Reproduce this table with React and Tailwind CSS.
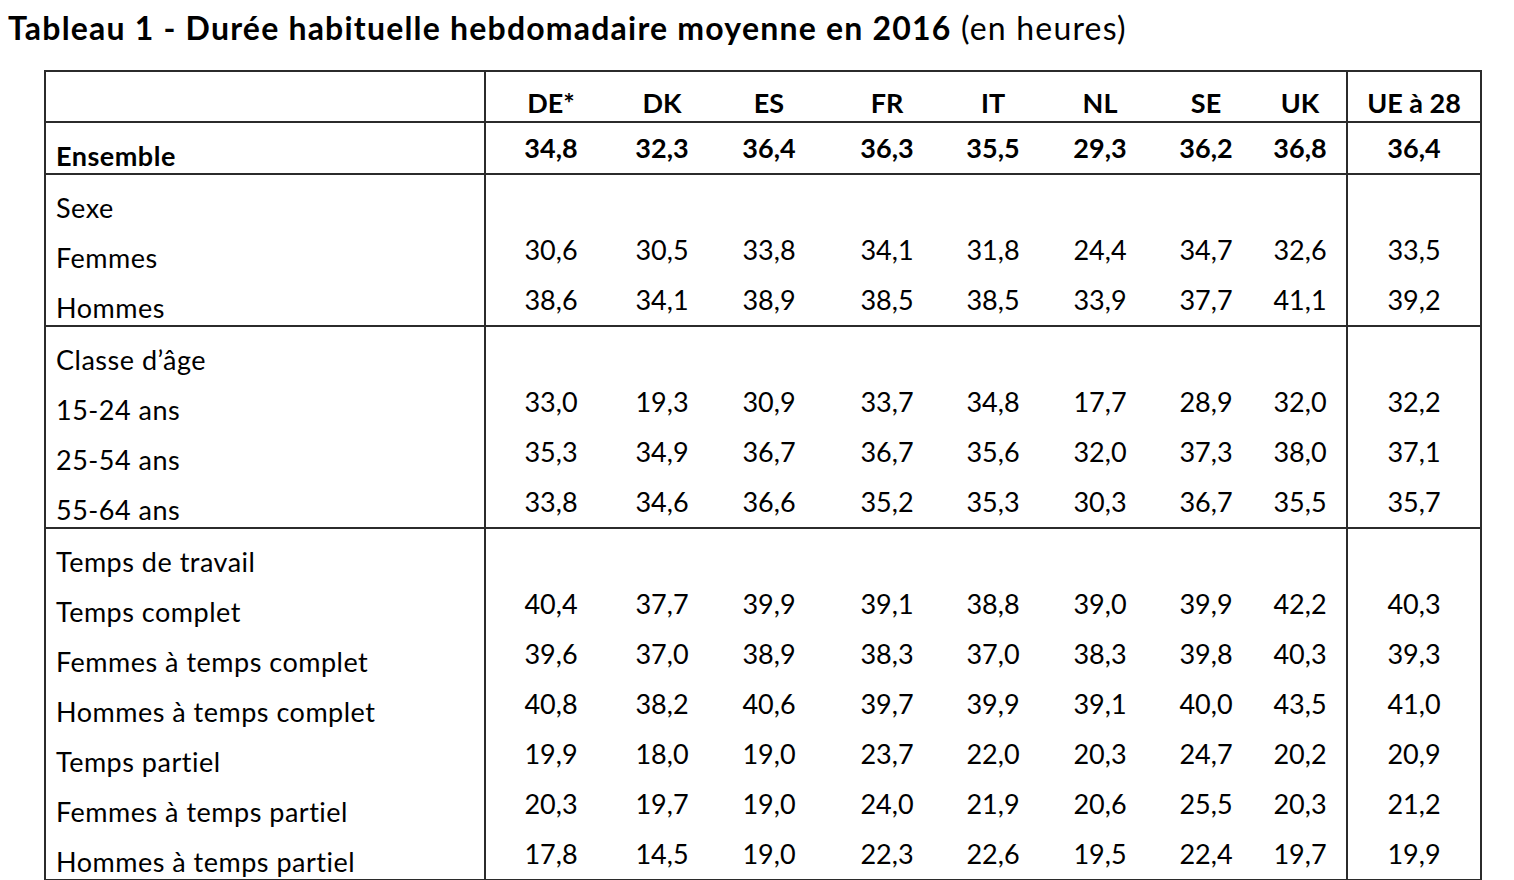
import React from 'react';

const columns = ['DE*', 'DK', 'ES', 'FR', 'IT', 'NL', 'SE', 'UK', 'UE à 28'];

const ensemble = ['34,8', '32,3', '36,4', '36,3', '35,5', '29,3', '36,2', '36,8', '36,4'];

const sections = [
  {
    title: 'Sexe',
    rows: [
      ['Femmes', '30,6', '30,5', '33,8', '34,1', '31,8', '24,4', '34,7', '32,6', '33,5'],
      ['Hommes', '38,6', '34,1', '38,9', '38,5', '38,5', '33,9', '37,7', '41,1', '39,2'],
    ],
  },
  {
    title: 'Classe d’âge',
    rows: [
      ['15-24 ans', '33,0', '19,3', '30,9', '33,7', '34,8', '17,7', '28,9', '32,0', '32,2'],
      ['25-54 ans', '35,3', '34,9', '36,7', '36,7', '35,6', '32,0', '37,3', '38,0', '37,1'],
      ['55-64 ans', '33,8', '34,6', '36,6', '35,2', '35,3', '30,3', '36,7', '35,5', '35,7'],
    ],
  },
  {
    title: 'Temps de travail',
    rows: [
      ['Temps complet', '40,4', '37,7', '39,9', '39,1', '38,8', '39,0', '39,9', '42,2', '40,3'],
      ['Femmes à temps complet', '39,6', '37,0', '38,9', '38,3', '37,0', '38,3', '39,8', '40,3', '39,3'],
      ['Hommes à temps complet', '40,8', '38,2', '40,6', '39,7', '39,9', '39,1', '40,0', '43,5', '41,0'],
      ['Temps partiel', '19,9', '18,0', '19,0', '23,7', '22,0', '20,3', '24,7', '20,2', '20,9'],
      ['Femmes à temps partiel', '20,3', '19,7', '19,0', '24,0', '21,9', '20,6', '25,5', '20,3', '21,2'],
      ['Hommes à temps partiel', '17,8', '14,5', '19,0', '22,3', '22,6', '19,5', '22,4', '19,7', '19,9'],
    ],
  },
];

const grid = 'grid grid-cols-[440px_130px_92px_122px_114px_98px_116px_96px_94px_132px]';

// one line of the table: label on the left, the nine values after it
const Row = ({ label, values = [], bold = false, header = false, height = 'h-[50px]' }) => (
  <div className={`${grid} ${height} ${bold ? 'font-bold' : ''}`}>
    <div className={`border-r-2 border-[#2b2b2b] pl-[10px] leading-none tracking-[0.5px] ${header ? 'pt-[18px]' : 'pt-[19px]'}`}>
      {label}
    </div>
    {columns.map((c, i) => (
      <div
        key={c}
        className={`text-center leading-none ${header ? 'pt-[17px]' : 'pt-[11px]'} ${i === 7 ? 'border-r-2 border-[#2b2b2b]' : ''}`}
      >
        {values[i] ?? ''}
      </div>
    ))}
  </div>
);

export default function App() {
  return (
    <div className="bg-white min-h-[880px] text-black text-[27px] font-['Lato',sans-serif]">
      <h1 className="pl-[8px] pt-[12px] h-[70px] leading-none text-[32px] tracking-[1.2px] font-normal">
        <span className="font-bold">Tableau 1 - Durée habituelle hebdomadaire moyenne en 2016</span> (en heures)
      </h1>

      <div className="ml-[44px] w-[1438px] border-2 border-[#2b2b2b]">
        <Row label="" values={columns} bold header height="h-[49px]" />

        <div className="border-t-2 border-[#2b2b2b]">
          <Row label="Ensemble" values={ensemble} bold />
        </div>

        {sections.map((s) => (
          <div key={s.title} className="border-t-2 border-[#2b2b2b]">
            <Row label={s.title} />
            {s.rows.map(([label, ...vals]) => (
              <Row key={label} label={label} values={vals} />
            ))}
          </div>
        ))}
      </div>
    </div>
  );
}
